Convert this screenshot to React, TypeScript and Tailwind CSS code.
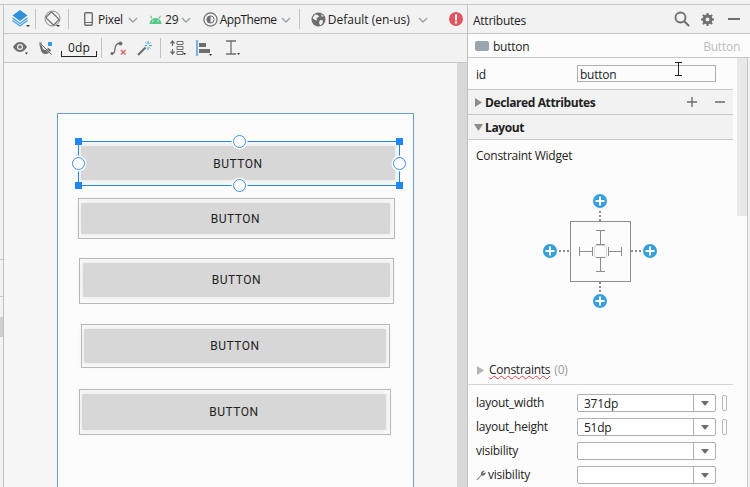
import React from 'react';

const ui = "font-['Open_Sans','Noto_Sans',sans-serif]";

function Caret() {
  return (
    <svg width="10" height="6" viewBox="0 0 10 6" className="ml-1 mt-px">
      <path d="M1 1l4 4 4-4" fill="none" stroke="#9aa0a4" strokeWidth="1.4" />
    </svg>
  );
}

function Sep() {
  return <div className="w-px h-[20px] bg-[#c4c4c4]" />;
}

function Tick({ x, y }: { x: number; y: number }) {
  return <path d={`M${x} ${y}l3 0-1.5 2z`} fill="#333" />;
}

function LayersIcon() {
  return (
    <svg width="18" height="18" viewBox="0 0 18 18">
      <path d="M8 0l7.500 5.500L8 11 .5 5.500z" fill="#2f8fd8" />
      <path d="M.5 8l7.500 5.500L15.500 8M.5 10.500L8 16l7.500-5.500" fill="none" stroke="#4aa3e6" strokeWidth="1.4" />
      <path d="M14 15l4 0-2 2z" fill="#333" />
    </svg>
  );
}

function RotateIcon() {
  return (
    <svg width="18" height="18" viewBox="0 0 18 18">
      <circle cx="8.500" cy="8.500" r="7.500" fill="none" stroke="#8a8a8a" strokeWidth="1" />
      <rect x="4.500" y="3" width="8" height="11" rx="1" transform="rotate(-45 8.500 8.500)" fill="#f2f2f2" stroke="#6e6e6e" strokeWidth="1.2" />
      <path d="M12 15l4 0-2 2z" fill="#333" />
    </svg>
  );
}

function PhoneIcon() {
  return (
    <svg width="9" height="14" viewBox="0 0 9 14">
      <rect x="0.7" y="0.7" width="7.6" height="12.6" rx="1.2" fill="none" stroke="#6e6e6e" strokeWidth="1.4" />
      <path d="M1 10.500h7" stroke="#6e6e6e" strokeWidth="1" />
    </svg>
  );
}

function AndroidIcon() {
  return (
    <svg width="13" height="9" viewBox="0 0 13 9">
      <path d="M0.500 9a6 6 0 0 1 12 0z" fill="#55c98a" />
      <path d="M3 3.500L1.500 0.700M10 3.500l1.500-2.800" stroke="#55c98a" strokeWidth="1.1" />
      <circle cx="4" cy="6" r="0.8" fill="#f2f2f2" />
      <circle cx="9" cy="6" r="0.8" fill="#f2f2f2" />
    </svg>
  );
}

function ThemeIcon() {
  return (
    <svg width="15" height="15" viewBox="0 0 15 15">
      <circle cx="7.500" cy="7.500" r="6.600" fill="none" stroke="#6e6e6e" strokeWidth="1.2" />
      <circle cx="7.500" cy="7.500" r="3.600" fill="none" stroke="#6e6e6e" strokeWidth="1" />
      <path d="M7.500 3.900a3.600 3.600 0 0 0 0 7.200z" fill="#6e6e6e" />
    </svg>
  );
}

function GlobeIcon() {
  return (
    <svg width="15" height="15" viewBox="0 0 15 15">
      <circle cx="7.500" cy="7.500" r="7" fill="#6e6e6e" />
      <path d="M4 2.500l3 .5 1 2-2.500 1L6 8.500 4 8 1.500 6zM9 8l3 .5-.5 3-2.500 2-1-3zM10 2l2.500 2L11 5z" fill="#f2f2f2" />
    </svg>
  );
}

function ErrorIcon() {
  return (
    <svg width="14" height="14" viewBox="0 0 14 14">
      <circle cx="7" cy="7" r="7" fill="#e05561" />
      <rect x="6" y="2.500" width="2" height="6" fill="#fff" />
      <rect x="6" y="9.500" width="2" height="2" fill="#fff" />
    </svg>
  );
}

function Toolbar2Icons() {
  return (
    <>
      <svg width="18" height="14" viewBox="0 0 18 14">
        <path d="M1 6c2-3.500 4.500-5 7-5s5 1.500 7 5c-2 3.500-4.500 5-7 5S3 9.500 1 6z" fill="#6e6e6e" />
        <circle cx="8" cy="6" r="3" fill="#f2f2f2" />
        <circle cx="8" cy="6" r="1.800" fill="#6e6e6e" />
        <Tick x={13} y={11.5} />
      </svg>
      <svg width="17" height="15" viewBox="0 0 17 15" className="ml-[8px]">
        <path d="M1 2l2.500-1 .8 5c.3 2 1.500 3 3 3s2.500-1 2.500-2.500L13 9c-1 3-3.500 4.500-6 4-2.500-.4-4-2.300-4.300-4.500z" fill="#6e6e6e" />
        <path d="M1 1l12 12" stroke="#f2f2f2" strokeWidth="1.2" />
        <path d="M1.500 1.500l12 12" stroke="#6e6e6e" strokeWidth="1" />
        <rect x="10" y="1" width="4" height="4" fill="#3a9bdc" />
      </svg>
      <div className="ml-[6px] mt-[2px] w-[36px] h-[16px] relative flex justify-center">
        <span className="text-[12px] leading-[13px] text-[#222] tracking-[0.2px]">0dp</span>
        <div className="absolute left-0 right-0 bottom-0 h-[6px] border-x border-b border-[#222]" />
      </div>
      <div className="ml-[4px] mr-[8px]"><Sep /></div>
      <svg width="17" height="15" viewBox="0 0 17 15">
        <path d="M1.500 12.500c3 .5 3-1.500 3.500-5s1.500-5 4-5" fill="none" stroke="#6e6e6e" strokeWidth="1.3" />
        <circle cx="2" cy="12.500" r="1.500" fill="#6e6e6e" />
        <circle cx="10.500" cy="2.500" r="2" fill="#6e6e6e" />
        <path d="M11 9l4.500 4.500m0-4.500L11 13.500" stroke="#e0616b" strokeWidth="1.5" />
      </svg>
      <svg width="15" height="15" viewBox="0 0 15 15" className="ml-[10px]">
        <path d="M1 14l7.500-7.500" stroke="#6e6e6e" strokeWidth="2.2" />
        <path d="M8 5l2 2" stroke="#f2f2f2" strokeWidth="1" />
        <path d="M11 0v3M11 6v3M8 4.500h2M12 4.500h3M8.500 1.500l1 1M13.500 1.500l-1 1M13.500 7.500l-1-1" stroke="#3a9bdc" strokeWidth="1" />
      </svg>
      <div className="ml-[8px] mr-[8px]"><Sep /></div>
      <svg width="18" height="16" viewBox="0 0 18 16">
        <path d="M3.500 1v5M1.500 3.500l2-2.500 2 2.500M3.500 9v5M1.500 11.500l2 2.500 2-2.500" fill="none" stroke="#6e6e6e" strokeWidth="1.3" />
        <path d="M8 1.500h6v3H8zM8 6.500h6v3H8zM8 11.500h6v3H8z" fill="none" stroke="#6e6e6e" strokeWidth="1" />
        <Tick x={14} y={13} />
      </svg>
      <svg width="18" height="17" viewBox="0 0 18 17" className="ml-[9px]">
        <path d="M1 0v16" stroke="#3a9bdc" strokeWidth="1.4" />
        <rect x="3" y="3" width="7" height="4" fill="#6e6e6e" />
        <rect x="3" y="9" width="11" height="4" fill="#6e6e6e" />
        <Tick x={13} y={14} />
      </svg>
      <svg width="17" height="16" viewBox="0 0 17 16" className="ml-[11px]">
        <path d="M1 1h10M1 14h10M6 1v13" stroke="#6e6e6e" strokeWidth="1.3" fill="none" />
        <Tick x={12} y={13} />
      </svg>
    </>
  );
}

function Handle({ className }: { className: string }) {
  return <div className={`absolute w-[7px] h-[7px] bg-[#1e88f0] ${className}`} />;
}

function Knob({ className }: { className: string }) {
  return <div className={`absolute w-[13px] h-[13px] rounded-full bg-white border-[1.5px] border-[#3a90e8] shadow-[0_0_0_1.5px_#fcfcfc] ${className}`} />;
}

function DesignButton({ box, face, label }: { box: string; face: string; label: string }) {
  return (
    <>
      <div className={`absolute bg-[#d6d7d6] rounded-[1px] flex items-center justify-center shadow-[0_0_6px_2px_#ebebeb] font-['Roboto',sans-serif] text-[12px] tracking-[0.5px] text-[#1f1f1f] ${face}`}>
        {label}
      </div>
      <div className={`absolute border border-[#b8b8b8] ${box}`} />
    </>
  );
}

function ConstraintWidget() {
  const plus = (cx: number, cy: number) => (
    <g key={`${cx}-${cy}`}>
      <circle cx={cx} cy={cy} r="7" fill="#35a0db" />
      <path d={`M${cx - 4.5} ${cy}h9M${cx} ${cy - 4.5}v9`} stroke="#fff" strokeWidth="2" />
    </g>
  );
  return (
    <svg width="120" height="122" viewBox="0 0 120 122">
      <rect x="30.5" y="31.5" width="60" height="60" fill="none" stroke="#8c8c8c" />
      <rect x="54.5" y="55.5" width="12" height="12" rx="2" fill="none" stroke="#d4d4d4" />
      <path d="M60.500 41v13M56 40.500h9M56 54.500h9M60.500 68v13M56 67.500h9M56 81.500h9M39 61.500h13M39.500 57v9M69 61.500h13M81.500 57v9M52.500 57v9M68.500 57v9" fill="none" stroke="#8c8c8c" />
      <path d="M60 21v10M60 92v10M19 61h11M91 61h11" stroke="#8c8c8c" strokeWidth="2" strokeDasharray="2 2" />
      {plus(60, 11)}
      {plus(10, 61)}
      {plus(110, 61)}
      {plus(60, 111)}
    </svg>
  );
}

function AttrSelect({ label, value, pill, wrench }: { label: string; value?: string; pill?: boolean; wrench?: boolean }) {
  return (
    <div className="flex items-center h-[18px] mb-[6px]">
      <div className="w-[109px] pl-[8px] flex items-center text-[12px] text-[#222]">
        {wrench && (
          <svg width="10" height="10" viewBox="0 0 10 10" className="mr-[2px]">
            <path d="M0.500 9.500L5 5c-.5-1.500 0-3 1.500-4 .8-.4 1.500-.4 2.500-.2L7 2.500 7.500 3.500 9.500 2c.3 1.200 0 2.300-1 3-.9.7-2 .8-3 .4L1.500 10z" fill="#6e6e6e" />
          </svg>
        )}
        {label}
      </div>
      <div className="w-[139px] h-[18px] flex border border-[#b0b0b0] rounded-[2px] bg-white">
        <div className="flex-1 pl-[6px] text-[12px] leading-[17px] text-[#222]">{value}</div>
        <div className="w-[22px] border-l border-[#b0b0b0] flex items-center justify-center">
          <svg width="8" height="5" viewBox="0 0 8 5"><path d="M0 0h8L4 5z" fill="#6e6e6e" /></svg>
        </div>
      </div>
      {pill && <div className="ml-[6px] w-[5px] h-[16px] rounded-[2px] border border-[#b8b8b8]" />}
    </div>
  );
}

function SectionHead({ title, open, actions }: { title: string; open?: boolean; actions?: boolean }) {
  return (
    <div className="h-[25px] bg-[#f2f2f2] border-b border-[#c8c8c8] flex items-center pl-[6px] pr-[8px]">
      <svg width="9" height="9" viewBox="0 0 9 9" className="mr-[2px]">
        <path d={open ? 'M0 1h9L4.500 8z' : 'M1 0l7 4.500L1 9z'} fill="#8c8c8c" />
      </svg>
      <span className="mt-[2px] text-[12px] font-bold tracking-[-0.4px] text-[#222] flex-1">{title}</span>
      {actions && (
        <svg width="38" height="10" viewBox="0 0 38 10">
          <path d="M0 5h10M5 0v10M28 5h10" stroke="#6e6e6e" strokeWidth="1.4" />
        </svg>
      )}
    </div>
  );
}

export default function App() {
  return (
    <div className={`w-[750px] h-[487px] overflow-hidden bg-[#f2f2f2] flex flex-col ${ui}`}>
      <div className="h-[5px] bg-[#f2f2f2] border-b border-[#c8c8c8] shrink-0" />
      <div className="flex flex-1 min-h-0">
        {/* left rail */}
        <div className="w-[4px] shrink-0 border-r border-[#c0c0c0] bg-[#f2f2f2] flex flex-col">
          <div className="h-[254px]" />
          <div className="h-[38px] border-y border-[#c8c8c8]" />
          <div className="h-[20px] bg-[#d0d0d0] mt-[20px]" />
        </div>

        {/* editor */}
        <div className="w-[464px] shrink-0 flex flex-col border-r border-[#c0c0c0]">
          <div className="h-[29px] shrink-0 border-b border-[#c8c8c8] flex items-center pl-[8px] text-[12px] text-[#222]">
            <LayersIcon />
            <div className="ml-[5px] mr-[8px]"><Sep /></div>
            <RotateIcon />
            <div className="ml-[6px] mr-[15px]"><Sep /></div>
            <PhoneIcon />
            <span className="ml-[5px] mt-[2px] w-[26px] tracking-[-0.3px]">Pixel</span>
            <Caret />
            <div className="ml-[11px]"><AndroidIcon /></div>
            <span className="ml-[3px] mt-[2px]">29</span>
            <div className="ml-[-2px]"><Caret /></div>
            <div className="ml-[12px]"><ThemeIcon /></div>
            <span className="ml-[2px] mt-[2px] w-[61px] tracking-[-0.5px]">AppTheme</span>
            <div className="ml-[-4px]"><Caret /></div>
            <div className="ml-[8px] mr-[11px]"><Sep /></div>
            <GlobeIcon />
            <span className="ml-[2px] mt-[2px]">Default (en-us)</span>
            <div className="ml-[4px]"><Caret /></div>
            <div className="ml-[21px]"><ErrorIcon /></div>
          </div>
          <div className="h-[29px] shrink-0 border-b border-[#c8c8c8] flex items-center pl-[8px]">
            <Toolbar2Icons />
          </div>
          <div className="flex flex-1 min-h-0">
            <div className="flex-1 bg-[#f6f6f6] pl-[53px] pt-[50px]">
              {/* design surface */}
              <div className="relative w-[357px] h-[400px] bg-[#fcfcfc] border border-[#6a9fd0]">
                <DesignButton box="left-[20px] top-[84px] w-[317px] h-[41px]" face="left-[23px] top-[89px] w-[309px] h-[31px]" label="BUTTON" />
                <DesignButton box="left-[21px] top-[144px] w-[315px] h-[46px]" face="left-[25px] top-[149px] w-[307px] h-[34px]" label="BUTTON" />
                <DesignButton box="left-[23px] top-[210px] w-[309px] h-[44px]" face="left-[26px] top-[215px] w-[302px] h-[34px]" label="BUTTON" />
                <DesignButton box="left-[21px] top-[275px] w-[312px] h-[46px]" face="left-[24px] top-[280px] w-[304px] h-[36px]" label="BUTTON" />

                {/* selected button */}
                <div className="absolute left-[23px] top-[32px] w-[314px] h-[34px] pt-[1px] bg-[#d6d7d6] flex items-center justify-center shadow-[0_0_4px_2px_#ebebeb] font-['Roboto',sans-serif] text-[12px] tracking-[0.5px] text-[#1f1f1f]">
                  BUTTON
                </div>
                <div className="absolute left-[20px] top-[27px] w-[322px] h-[45px] border border-[#1e88f0]" />
                <Handle className="left-[17px] top-[24px]" />
                <Handle className="left-[338px] top-[24px]" />
                <Handle className="left-[17px] top-[68px]" />
                <Handle className="left-[338px] top-[68px]" />
                <Knob className="left-[175px] top-[21px]" />
                <Knob className="left-[175px] top-[65px]" />
                <Knob className="left-[14px] top-[43px]" />
                <Knob className="left-[335px] top-[43px]" />
              </div>
            </div>
            <div className="w-[10px] bg-[#d8d8d8]" />
          </div>
        </div>

        {/* attributes panel */}
        <div className="flex-1 min-w-0 flex flex-col bg-[#fcfcfc] tracking-[-0.25px]">
          <div className="h-[29px] shrink-0 bg-[#f2f2f2] border-b border-[#c8c8c8] flex items-center pl-[5px] pr-[10px]">
            <span className="mt-[3px] text-[12px] text-[#222] flex-1">Attributes</span>
            <svg width="16" height="16" viewBox="0 0 16 16">
              <circle cx="6.500" cy="6.500" r="5" fill="none" stroke="#6e6e6e" strokeWidth="1.8" />
              <path d="M10 10l5 5" stroke="#6e6e6e" strokeWidth="2" />
            </svg>
            <svg width="13" height="13" viewBox="0 0 13 13" className="ml-[11px]">
              <circle cx="6.500" cy="6.500" r="3.500" fill="none" stroke="#6e6e6e" strokeWidth="3" />
              <path d="M6.500 0v13M0 6.500h13M1.900 1.900l9.200 9.200M11.100 1.900l-9.200 9.200" stroke="#6e6e6e" strokeWidth="2" strokeDasharray="2 9 2" />
            </svg>
            <div className="ml-[14px] w-[12px] h-[2px] bg-[#6e6e6e]" />
          </div>
          <div className="h-[24px] shrink-0 bg-[#fcfcfc] border-b border-[#c8c8c8] flex items-center pl-[7px] pr-[10px]">
            <div className="w-[14px] h-[10px] rounded-[2px] bg-[#9aa5ae]" />
            <span className="ml-[4px] mt-[2px] text-[12px] text-[#222] flex-1">button</span>
            <span className="mt-[2px] text-[12px] text-[#bdbdbd]">Button</span>
          </div>
          <div className="flex flex-1 min-h-0">
            <div className="w-[269px] shrink-0">
              <div className="w-[265px]">
                <div className="h-[32px] flex items-center border-b border-[#c8c8c8]">
                  <span className="w-[109px] pl-[8px] mt-[2px] text-[12px] text-[#222]">id</span>
                  <div className="w-[139px] h-[17px] border border-[#b0b0b0] pl-[2px] text-[12px] leading-[17px] text-[#222] relative bg-[#fcfcfc]">
                    button
                    <svg width="7" height="14" viewBox="0 0 7 14" className="absolute left-[97px] top-[-4px]">
                      <path d="M0 .5h7M0 13.500h7M3.500 0v14" stroke="#222" strokeWidth="1" />
                    </svg>
                  </div>
                </div>
                <SectionHead title="Declared Attributes" actions />
                <SectionHead title="Layout" open />
                <div className="h-[30px] pl-[8px] pt-[1px] flex items-center text-[12px] text-[#222]">Constraint Widget</div>
                <div className="pl-[72px] pt-[20px] h-[171px]">
                  <ConstraintWidget />
                </div>
                <div className="h-[44px] pl-[8px] pb-[5px] border-b border-[#d4d4d4] flex items-end">
                  <svg width="9" height="9" viewBox="0 0 9 9" className="mb-[4px]"><path d="M1 0l7 4.500L1 9z" fill="#b4b4b4" /></svg>
                  <span className="ml-[4px] text-[12px] text-[#222] underline decoration-wavy decoration-[#e04040] decoration-1">Constraints</span>
                  <span className="ml-[4px] text-[12px] text-[#9a9a9a]">(0)</span>
                </div>
              </div>
              <div className="pt-[9px]">
                <AttrSelect label="layout_width" value="371dp" pill />
                <AttrSelect label="layout_height" value="51dp" pill />
                <AttrSelect label="visibility" />
                <AttrSelect label="visibility" wrench />
              </div>
            </div>
            {/* scrollbar */}
            <div className="w-[11px] border-r border-[#c8c8c8]">
              <div className="w-[10px] h-[158px] bg-[#e8e8e8]" />
            </div>
            <div className="flex-1 bg-[#f2f2f2]" />
          </div>
        </div>
      </div>
    </div>
  );
}
